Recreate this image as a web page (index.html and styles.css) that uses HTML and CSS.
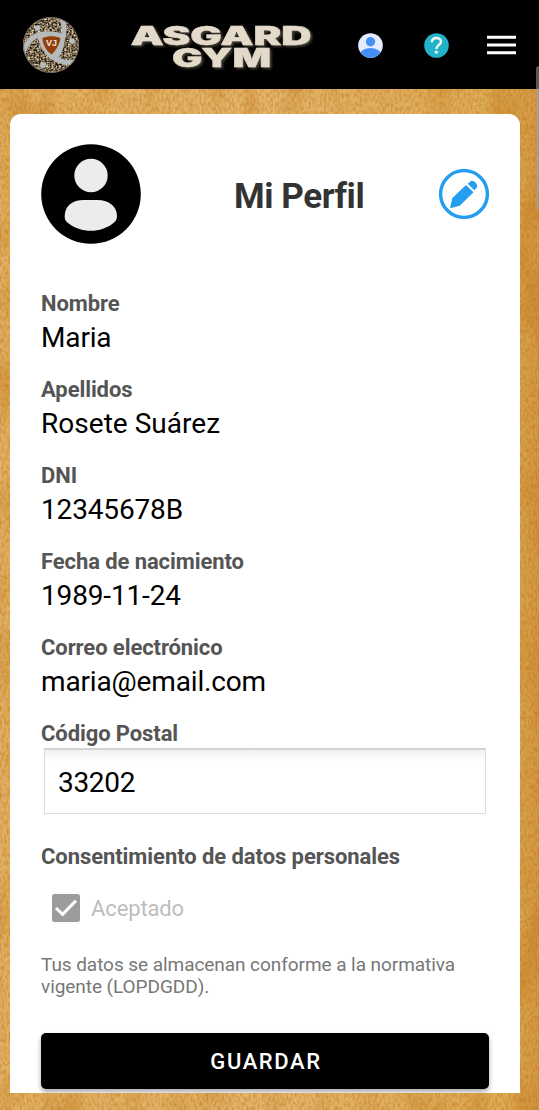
FILE: index.html
```html
<!DOCTYPE html>
<html lang="es">
<head>
<meta charset="utf-8">
<meta name="viewport" content="width=device-width">
<title>Mi Perfil</title>
<link rel="stylesheet" href="styles.css">
</head>
<body>
<div class="app">
  <svg class="parchment" width="539" height="1021" aria-hidden="true">
    <defs>
      <linearGradient id="tan"><stop offset="0" stop-color="#e2b162"/><stop offset=".5" stop-color="#e4b66c"/><stop offset=".93" stop-color="#dfac55"/><stop offset="1" stop-color="#d49843"/></linearGradient>
      <filter id="fiber" x="0" y="0" width="100%" height="100%" color-interpolation-filters="sRGB"><feTurbulence type="fractalNoise" baseFrequency=".45 .22" numOctaves="3" seed="5"/><feColorMatrix values="0 0 0 0 .70  0 0 0 0 .43  0 0 0 0 .10  1 0 0 0 -.36"/></filter>
      <filter id="stain" x="0" y="0" width="100%" height="100%" color-interpolation-filters="sRGB"><feTurbulence type="fractalNoise" baseFrequency=".035 .015" numOctaves="2" seed="8"/><feColorMatrix values="0 0 0 0 .76  0 0 0 0 .47  0 0 0 0 .10  1 0 0 0 -.42"/></filter>
    </defs>
    <rect width="539" height="1021" fill="url(#tan)"/>
    <rect width="539" height="1021" filter="url(#stain)"/>
    <rect width="539" height="1021" filter="url(#fiber)"/>
  </svg>
  <header class="topbar">
    <svg class="emblem" viewBox="0 0 56 56">
      <defs>
        <clipPath id="disc"><circle cx="28" cy="28" r="28"/></clipPath>
        <filter id="stone" x="0" y="0" width="100%" height="100%" color-interpolation-filters="sRGB"><feTurbulence type="fractalNoise" baseFrequency=".55" numOctaves="2" seed="3"/><feColorMatrix values="1.7 0 0 0 -.38  1.6 0 0 0 -.39  1.4 0 0 0 -.38  0 0 0 0 1"/></filter>
      </defs>
      <g clip-path="url(#disc)">
        <rect width="56" height="56" filter="url(#stone)"/>
        <path d="M15 16C24 13 34 14 42 18C42 30 38 39 32 44C22 39 15 29 15 16Z" fill="#b7babb"/>
        <g fill="none" stroke="#b7babb" stroke-width="5">
          <path d="M0 37C3 26 9 18 21 17"/>
          <path d="M38 0C42 7 42 14 39.5 23"/>
          <path d="M52 45C42 47 31 43 24 35"/>
        </g>
        <path d="M19.5 21C25 18.5 32 18.5 37.5 21C36.5 28 32.5 34 28.5 37.5C23.5 34 19.5 28 19.5 21Z" fill="#933f0d"/>
        <g fill="#b4bdc1"><circle cx="14.5" cy="11" r="2.8"/><circle cx="49" cy="24" r="2.8"/><circle cx="20" cy="48" r="3"/></g>
      </g>
      <text class="emblem-text" x="23" y="28.5" textLength="11" lengthAdjust="spacingAndGlyphs">VJ</text>
      <circle cx="28" cy="28" r="27.5" fill="none" stroke="#736b60" stroke-width="1"/>
    </svg>
    <svg class="wordmark" viewBox="0 0 190 50">
      <defs><filter id="relief"><feDropShadow dx="2" dy="1.5" stdDeviation="1.2" flood-color="#6d6656" flood-opacity=".65"/></filter></defs>
      <g class="wordmark-text" filter="url(#relief)">
        <text x="3.5" y="23.5" textLength="181" lengthAdjust="spacingAndGlyphs">ASGARD</text>
        <text x="45" y="46" textLength="99" lengthAdjust="spacingAndGlyphs">GYM</text>
      </g>
    </svg>
    <nav class="tools">
      <svg class="tool" viewBox="0 0 25 25"><defs><clipPath id="user"><circle cx="12.5" cy="12.5" r="12.3"/></clipPath></defs><g clip-path="url(#user)"><path d="M0 0H25V25H0Z" fill="#e6ebff"/><g fill="#448ff6"><circle cx="12.5" cy="8.7" r="4.7"/><ellipse cx="12.5" cy="21.3" rx="10.7" ry="6.2"/></g></g></svg>
      <svg class="tool" viewBox="0 0 25 25"><circle cx="12.5" cy="12.5" r="12.3" fill="#22b3ca"/><path d="M7.8 9.2C8 3.6 17 3.8 17 8.7C17 12 12.3 12 12.3 15.9" fill="none" stroke="#f4f5ef" stroke-width="2.4"/><circle cx="12.3" cy="19.2" r="1.6" fill="#f4f5ef"/></svg>
      <svg class="menu" viewBox="0 0 29 20"><path d="M0 2.2H29M0 10H29M0 17.8H29" stroke="#fff" stroke-width="2.9"/></svg>
    </nav>
  </header>
  <main class="card">
    <div class="profile-head">
      <svg class="avatar" viewBox="0 0 100 100"><circle cx="50" cy="50" r="49.8"/><g fill="#ececec"><circle cx="50" cy="31.5" r="16.7"/><path d="M43 56H56C69 56 76 63 76 72C76 75 75 77 73 78.5C60 89.5 40 89.5 27 79C24.5 77 23.5 75 23.7 72C24 62 31 56 43 56Z"/></g></svg>
      <h1 class="title">Mi Perfil</h1>
      <svg class="edit" viewBox="0 0 50 50"><circle cx="25" cy="25" r="23.4" fill="none" stroke="#249eef" stroke-width="3.4"/><g fill="#249eef"><path d="M12 38.2L14 29.5L27 17L33.5 23.2L20.5 36Z" stroke="#249eef" stroke-width="1.5" stroke-linejoin="round"/><path d="M28.8 14.8L31.4 12.4C34 10 40 16 37.8 18.6L35.4 21.3Z"/></g></svg>
    </div>
    <dl class="fields">
      <div class="field"><dt>Nombre</dt><dd>Maria</dd></div>
      <div class="field"><dt>Apellidos</dt><dd class="surname">Rosete Suárez</dd></div>
      <div class="field"><dt>DNI</dt><dd>12345678B</dd></div>
      <div class="field"><dt>Fecha de nacimiento</dt><dd>1989-11-24</dd></div>
      <div class="field"><dt>Correo electrónico</dt><dd>maria@email.com</dd></div>
    </dl>
    <label class="label" for="postal">Código Postal</label>
    <input class="postal" id="postal" value="33202">
    <h2 class="label consent">Consentimiento de datos personales</h2>
    <div class="accept"><svg class="check" viewBox="0 0 28 28"><rect width="28" height="28" rx="2.5" fill="#9c9c9c"/><path d="M4 14L10.6 20.3L24 6.6" fill="none" stroke="#fff" stroke-width="3"/></svg><span>Aceptado</span></div>
    <p class="note">Tus datos se almacenan conforme a la normativa<br>vigente (LOPDGDD).</p>
    <button class="save">GUARDAR</button>
  </main>
  <div class="scrollbar"></div>
</div>
</body>
</html>
```
FILE: styles.css
```css
* { box-sizing: border-box; }
body { margin: 0; font-family: Roboto, sans-serif; }
.app { position: relative; width: 539px; height: 1110px; overflow: hidden; background: #dca755; }
.parchment { position: absolute; left: 0; top: 89px; }
.topbar { position: relative; display: flex; align-items: center; height: 89px; padding: 0 23px; background: #000; }
.emblem { width: 56px; height: 56px; }
.emblem-text { font: bold 9px "Liberation Sans", sans-serif; fill: #eee5da; }
.wordmark { width: 190px; height: 50px; margin: 3px 0 0 48px; overflow: visible; }
.wordmark-text { font: 900 25.5px Inter, sans-serif; fill: #e3dac9; stroke: #e3dac9; stroke-width: .4; }
.tools { display: flex; align-items: center; margin: 1px 0 0 41px; }
.tool { width: 25px; height: 25px; margin-right: 41px; }
.menu { width: 29px; height: 20px; margin-left: -3px; flex: none; }
.card { position: relative; width: 510px; height: 979px; margin: 25px 0 0 10px; padding: 31px; background: #fff; border-radius: 11px 11px 0 0; overflow: hidden; }
.profile-head { display: flex; align-items: center; height: 100px; margin-top: -1px; }
.avatar { width: 100px; height: 100px; }
.title { flex: 1; margin: 5px 0 0 93px; font-size: 35px; line-height: 42px; letter-spacing: -.42px; color: #333; font-weight: 700; }
.edit { width: 50px; height: 50px; }
.fields { margin: 45px 0 0; }
.field { height: 86px; }
.field dt, .label { display: block; margin: 0; font-size: 22px; line-height: 30px; letter-spacing: -.09px; font-weight: 700; color: #555; }
.field dd { margin: 0; font-size: 28px; line-height: 38px; letter-spacing: -.15px; color: #000; }
.field .surname { letter-spacing: .03px; }
.postal { display: block; width: 442px; height: 66px; margin: -1px 0 0 3px; padding: 2px 12px 0 13px; border: 1px solid #dcdcdc; border-top: 2px solid #d2d2d2; border-radius: 0; background: linear-gradient(#f2f2f2, #fff 12px); font: 28px Roboto, sans-serif; letter-spacing: -.3px; color: #000; outline: none; }
.consent { margin-top: 28px; letter-spacing: -.07px; }
.accept { display: flex; align-items: center; gap: 11px; height: 30px; margin: 21px 0 0 11px; color: #bdbdbd; font-size: 22px; letter-spacing: -.12px; }
.check { width: 28px; height: 28px; }
.note { margin: 31px 0 0; font-size: 19px; line-height: 22px; letter-spacing: -.06px; color: #777; white-space: nowrap; }
.save { display: block; width: 448px; height: 56px; margin-top: 35px; padding: 0 0 0 2px; border: 0; border-radius: 5px; background: #000; box-shadow: 0 3px 5px #aaa; color: #fff; font: 500 22px Roboto, sans-serif; letter-spacing: 1.6px; }
.scrollbar { position: absolute; right: 0; top: 66px; width: 3px; height: 144px; background: rgba(160,160,160,.55); border-radius: 3px 0 0 3px; }
```
